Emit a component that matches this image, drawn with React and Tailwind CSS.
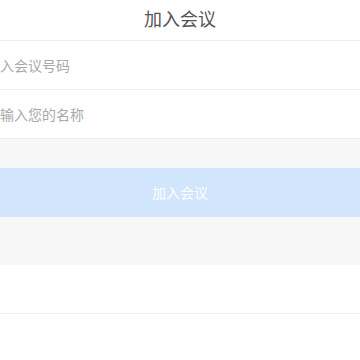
import React from "react";

const font = { fontFamily: '"Noto Sans CJK SC", "Noto Sans", sans-serif' };

const Field = ({ placeholder }) => (
  <div className="h-[49px] flex items-center border-b border-[#ededed] bg-white">
    <input
      className="w-full bg-transparent outline-none text-[14px] text-[#333] placeholder:text-[#a8a8a8] pl-0"
      placeholder={placeholder}
      style={font}
    />
  </div>
);

const App = () => {
  return (
    <div className="w-[360px] h-[360px] bg-white overflow-hidden" style={font}>
      {/* header */}
      <div className="h-[41px] flex items-center justify-center border-b border-[#ededed]">
        <h1 className="text-[18px] text-[#555] leading-none -mt-[5px]">加入会议</h1>
      </div>

      <Field placeholder="入会议号码" />
      <Field placeholder="输入您的名称" />

      <div className="bg-[#f7f7f7] pt-[29px] pb-[48px]">
        <button className="w-full h-[49px] bg-[#d1e5fd] text-white text-[14px] flex items-center justify-center">
          加入会议
        </button>
      </div>

      <div className="h-[49px] border-b border-[#f0f0f0] bg-white" />
    </div>
  );
};

export default App;
